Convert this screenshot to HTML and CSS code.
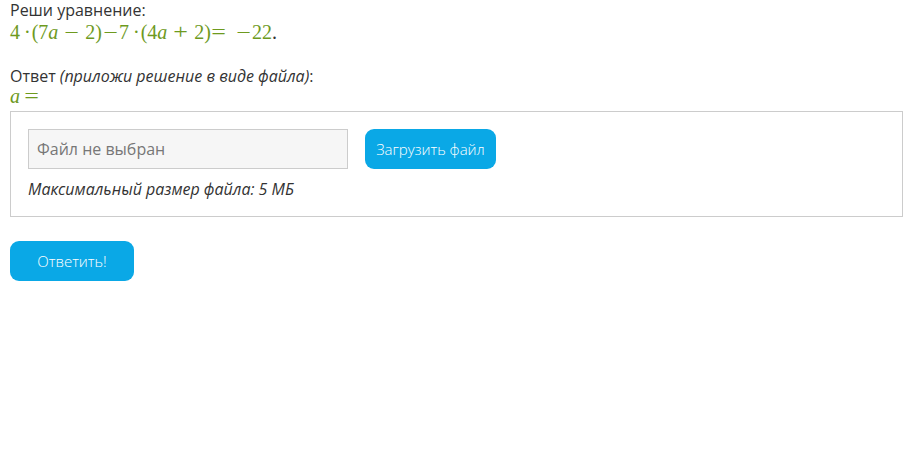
FILE: index.html
```html
<!DOCTYPE html>
<html lang="ru">
<head>
  <meta charset="UTF-8">
  <meta name="viewport" content="width=device-width, initial-scale=1.0">
  <title>Задание</title>
  <link rel="stylesheet" href="styles.css">
</head>
<body>
  <div class="page">
    <p class="task_text">Реши уравнение:</p>
    <div class="formula">4<span class="cdot">·</span>(7<i>a</i><span class="bin">−</span>2)<span class="sign">−</span>7<span class="cdot">·</span>(4<i>a</i><span class="bin">+</span>2)<span class="sign rel">=</span><span class="sign">−</span>22<span class="dot">.</span></div>

    <p class="answer_text">Ответ <i>(приложи решение в виде файла)</i>:</p>
    <div class="formula var"><i>a</i><span class="sign rel">=</span></div>

    <div class="upload_box">
      <div class="upload_row">
        <div class="file_field">Файл не выбран</div>
        <button class="blue_btn upload_btn" type="button">Загрузить файл</button>
      </div>
      <p class="hint">Максимальный размер файла: 5 МБ</p>
    </div>

    <button class="blue_btn submit_btn" type="button">Ответить!</button>
  </div>
</body>
</html>
```

FILE: styles.css
```css
* {
  box-sizing: border-box;
}
body {
  margin: 0;
  font-family: "Open Sans", Arial, sans-serif;
  color: #333;
  background: #fff;
}
.page {
  padding: 0 8px 0 10px;
}
p {
  margin: 0;
}
.task_text {
  font-size: 16px;
  line-height: 20px;
}

/* formula, TeX-like spacing */
.formula {
  font-family: "Liberation Serif", "Times New Roman", serif;
  font-size: 20px;
  line-height: 25px;
  color: #6e9a1e;
}
.formula .dot {
  color: #333;
}
.cdot {
  margin: 0 1px 0 4px;
}
.bin,
.sign {
  display: inline-block;
  width: 15px;
  text-align: center;
  transform: scaleX(1.3);
}
.bin {
  margin: 0 6px;
}
.sign {
  margin: 0 1px;
}
.rel {
  margin: 0 9px 0 0;
}
.var {
  line-height: 20px;
}
.var .rel {
  margin-left: 4px;
}

.answer_text {
  margin-top: 21px;
  font-size: 16px;
  line-height: 20px;
}
.upload_box {
  margin-top: 5px;
  border: 1px solid #ccc;
  padding: 17px;
  height: 106px;
}
.upload_row {
  display: flex;
  align-items: center;
  gap: 17px;
}
.file_field {
  width: 320px;
  height: 40px;
  border: 1px solid #ccc;
  background: #f6f6f6;
  color: #777;
  font-size: 16px;
  line-height: 38px;
  padding: 0 8px;
}
.blue_btn {
  border: none;
  background: #0aa8e6;
  color: #fff;
  font-family: "Open Sans", Arial, sans-serif;
  font-weight: 300;
  font-size: 15px;
  height: 40px;
  border-radius: 9px;
  padding: 0;
}
.upload_btn {
  width: 131px;
}
.hint {
  margin-top: 10px;
  font-style: italic;
  font-size: 16px;
  line-height: 20px;
}
.submit_btn {
  margin-top: 24px;
  width: 124px;
}
```
